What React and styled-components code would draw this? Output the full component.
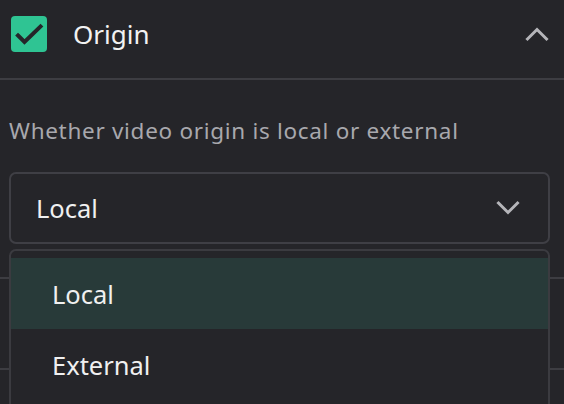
import React from "react";
import styled, { createGlobalStyle } from "styled-components";

const Global = createGlobalStyle`
  html, body { margin: 0; padding: 0; background: #252529; }
  body { font-family: "Noto Sans", "Open Sans", sans-serif; color: #f0f0f0; overflow: hidden; }
  * { box-sizing: border-box; }
`;

const Page = styled.div`
  width: 564px;
  height: 404px;
  background: #252529;
  overflow: hidden;
  position: relative;
`;

const Header = styled.div`
  height: 80px;
  display: flex;
  align-items: center;
  padding: 0 15px 10px 11px;
  border-bottom: 2px solid #3d3d42;
`;

const Check = styled.div`
  width: 36px;
  height: 36px;
  border-radius: 4px;
  background: #2fc493;
  flex-shrink: 0;
  display: flex;
`;

const Title = styled.div`
  margin-left: 26px;
  font-size: 26px;
  flex: 1;
  color: #f2f2f2;
`;

const Body = styled.div`
  padding: 38px 14px 33px 9px;
  border-bottom: 2px solid #3d3d42;
`;

const Desc = styled.div`
  font-size: 22.5px;
  letter-spacing: 0.7px;
  color: #a8a8ad;
  padding-left: 0;
  line-height: 26px;
`;

const SelectWrap = styled.div`
  position: relative;
  margin-top: 28px;
`;

const SelectBox = styled.div`
  height: 72px;
  border: 2px solid #3f3f45;
  border-radius: 7px;
  display: flex;
  align-items: center;
  padding: 0 28px 0 25px;
  font-size: 25.5px;
`;

const SelectValue = styled.div`
  flex: 1;
`;

const Menu = styled.div`
  position: absolute;
  top: 77px;
  left: 0;
  right: 0;
  border: 2px solid #3b3b40;
  border-radius: 7px;
  background: #252529;
  padding-top: 7px;
  z-index: 2;
`;

const Item = styled.div`
  height: 71px;
  display: flex;
  align-items: center;
  padding-left: 41px;
  font-size: 25.5px;
  background: ${(p) => (p.$active ? "#283a39" : "transparent")};
`;

const NextRow = styled.div`
  height: 91px;
  border-bottom: 2px solid #3d3d42;
`;

export default function App() {
  return (
    <Page>
      <Global />
      <Header>
        <Check>
          <svg width="36" height="36" viewBox="0 0 36 36" fill="none" stroke="#25252a" strokeWidth="4" strokeLinecap="square">
            <path d="M7 19.5L13.5 26L29.5 10.5" />
          </svg>
        </Check>
        <Title>Origin</Title>
        <svg width="24" height="16" viewBox="0 0 24 16" fill="none" stroke="#b5b5b9" strokeWidth="3" strokeLinecap="square">
          <path d="M2.5 13L12 3.5L21.5 13" />
        </svg>
      </Header>
      <Body>
        <Desc>Whether video origin is local or external</Desc>
        <SelectWrap>
          <SelectBox>
            <SelectValue>Local</SelectValue>
            <svg width="24" height="16" viewBox="0 0 24 16" fill="none" stroke="#b5b5b9" strokeWidth="3" strokeLinecap="square">
              <path d="M2.5 3L12 12.5L21.5 3" />
            </svg>
          </SelectBox>
          <Menu>
            <Item $active>Local</Item>
            <Item>External</Item>
            <Item />
          </Menu>
        </SelectWrap>
      </Body>
      <NextRow />
      <NextRow />
    </Page>
  );
}
